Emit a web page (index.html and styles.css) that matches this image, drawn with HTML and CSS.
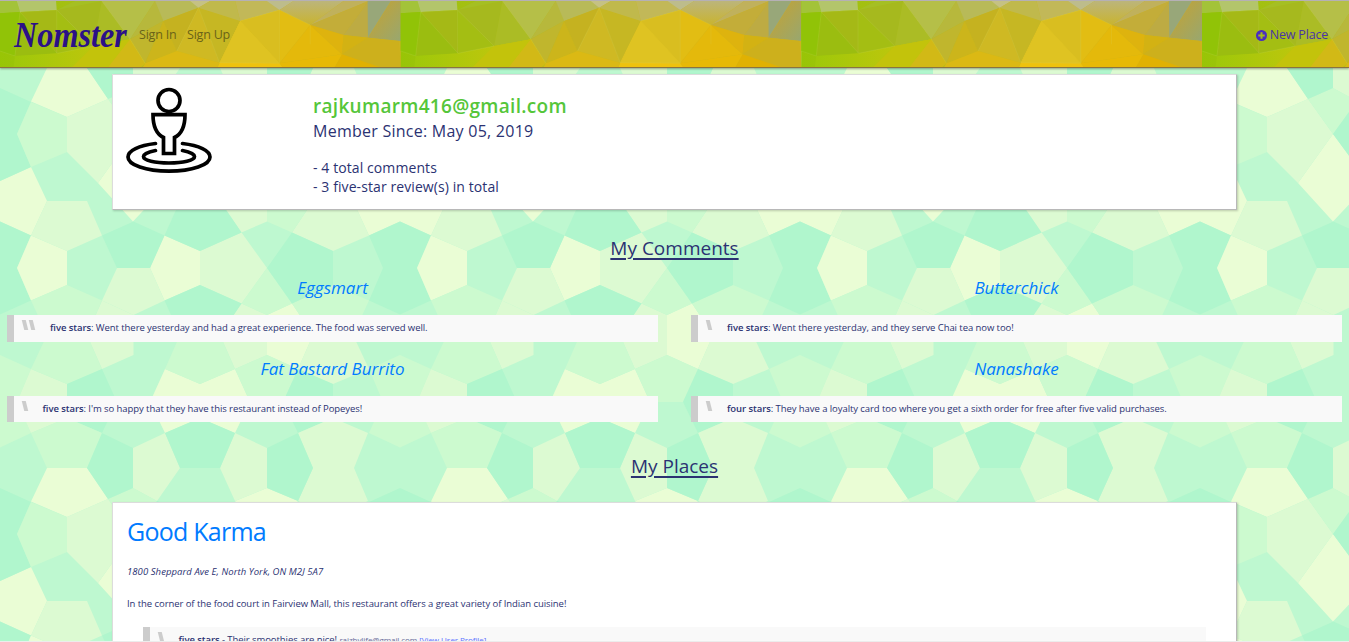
FILE: index.html
```html
<!DOCTYPE html>
<html lang="en">
<head>
<meta charset="utf-8">
<title>Nomster</title>
<link rel="stylesheet" href="styles.css">
</head>
<body>
<svg class="backdrop" width="1349" height="642" aria-hidden="true">
  <defs>
    <g id="tile">
      <g fill="#eafdd5">
        <path d="M31 235.5L67 251V285L31 300.5 17 268zM164.5 235.5L200 251V285L164.5 300.5 150 268z"/>
        <path d="M353 201L369 235.5 400 221.5 431 235.5 447 201 431 167 400 181 369 167z"/>
        <path d="M165 369L200 384 235 369 250 402 235 433 200 418 165 433 150 402z"/>
        <path d="M267 315L292 303.5 313 335 298 369 267 355zM133 134L98 183 133 221.5 169 183zM47 68H87L108 99 67 117 31 101.5zM235 101L267 88 298 101 267 134z"/>
      </g>
      <g fill="#dcfad2">
        <path d="M47 201H87L102 235.5 67 251 31 235.5zM200 251L241.5 232.5 267 268 241.5 303.5 200 285zM117 268H150L164.5 300.5 133.5 315 102 300.5z"/>
        <path d="M87 335L102 300.5 133.5 315V355L102 369zM31 369L67 384V418L31 433 17 402zM292 232.5L333 251 369 235.5 353 201H313z"/>
        <path d="M67 117L108 99 133 134 98 183 67 152zM133 48L165 33 180 68 157 101 133 88zM235 33L267 48V88L235 101 220 68zM298 33L333 18 368 33 354 68 368 101 333 117 298 101 313 68z"/>
        <path d="M220 335L241.5 303.5 267 315V355L235 369zM313 335H353L369 369 333 384 298 369zM220 201L241.5 232.5 267 221.5V182z"/>
      </g>
      <g fill="#ccfacf">
        <path d="M31 300.5L67 285 102 300.5 87 335H47zM180 335H220L235 369 200 384 165 369zM47 335H87L102 369 67 384 31 369z"/>
        <path d="M400 355L431 369 417 402 431 433 400 447.5 369 433 383 402 369 369zM31 33L67 18 102 33 87 68H47zM31 102L67 117V152L31 167 17 134z"/>
        <path d="M108 99L133 88 157 101 133 134zM235 369L267 355 298 369 283 402H250zM267 268L292 303.5 267 315 241.5 303.5zM292 303.5L333 285 369 300.5 353 335H313zM267 182L313 201 292 232.5 267 221.5z"/>
      </g>
      <g fill="#b0f6cd">
        <path d="M102 235.5L133.5 221.5 164.5 235.5 150 268H117zM180 201H220L241.5 232.5 200 251 164.5 235.5zM164.5 300.5L200 285 241.5 303.5 220 335H180z"/>
        <path d="M67 384L102 369 117 402 102 433 67 418zM400 221.5L431 235.5 417 268 431 300.5 400 314.5 369 300.5 383 268 369 235.5zM267 268L292 232.5 333 251V285L292 303.5z"/>
        <path d="M400 88L431 102 417 134 431 167 400 181 369 167 383 134 369 102zM87 68L102 33 133 48V88L108 99zM165 33L200 18 235 33 220 68H180zM267 48L298 33 313 68 298 101 267 88z"/>
        <path d="M298 369L333 384V418L298 433 283 402zM157 101L200 117V151L169 183 133 134z"/>
      </g>
    </g>
    <g id="column"><use href="#tile" y="-400"/><use href="#tile"/><use href="#tile" y="400"/></g>
  </defs>
  <rect width="1349" height="642" fill="#bef8d0"/>
  <use href="#column" x="-400"/><use href="#column"/><use href="#column" x="400"/><use href="#column" x="800"/><use href="#column" x="1200"/>
</svg>

<header class="navbar">
  <svg class="facets" width="1349" height="68" aria-hidden="true">
    <defs>
      <linearGradient id="sweep" x1="0" y1="0" x2="1202" y2="0" gradientUnits="userSpaceOnUse">
        <stop offset="0" stop-color="#98c506"/><stop offset=".25" stop-color="#aabd18"/><stop offset=".45" stop-color="#c7ba20"/><stop offset="1" stop-color="#ceb21f"/>
      </linearGradient>
      <linearGradient id="haze" x1="0" y1="0" x2="0" y2="1"><stop offset="0" stop-color="#bcb57b"/><stop offset="1" stop-color="#c9b42f"/></linearGradient>
      <linearGradient id="dusk" x1="0" y1="0" x2="1" y2="1"><stop offset=".3" stop-color="#b9a442"/><stop offset="1" stop-color="#98a770"/></linearGradient>
      <linearGradient id="lime" x1="0" y1="0" x2="1" y2="0"><stop offset="0" stop-color="#9fc80a"/><stop offset="1" stop-color="#cfc50e"/></linearGradient>
      <g id="facet" transform="scale(.3336 .3333)">
        <path fill="url(#sweep)" d="M0 0H1202V204H0z"/>
        <path fill="#a3c339" d="M0 0H50L60 33 0 37z"/><path fill="#b3c56b" d="M50 0H168L170 27 60 33z"/>
        <path fill="#a5bf23" d="M170 27L225 0H305L172 157z"/><path fill="#a5b916" d="M60 33L170 27 172 157z"/>
        <path fill="#9bbd10" d="M60 33L172 157 45 165z"/><path fill="#a4be13" d="M170 27L280 135 172 157z"/>
        <path fill="#a6b91e" d="M305 0L170 27 280 135z"/><path fill="#abbc25" d="M305 0L390 115 280 135z"/>
        <path fill="#b5bf48" d="M305 0H465L390 115z"/><path fill="#b7b83c" d="M465 0H530L490 60 390 115z"/>
        <path fill="#b8ba58" d="M465 0H580L595 20 490 60z"/><path fill="#c5c184" d="M570 0H630L595 20z"/>
        <path fill="#c0b62d" d="M490 60L390 115 435 187z"/><path fill="#ccb51b" d="M490 60L435 187 530 150z"/>
        <path fill="#c5b220" d="M490 60L595 20 530 150z"/><path fill="#cfb923" d="M595 20L530 150 658 185z"/>
        <path fill="#c6b723" d="M595 20L720 60 658 185z"/><path fill="#c0b94c" d="M630 0H705L720 60 595 20z"/>
        <path fill="#c2b858" d="M705 0H810L838 27 720 60z"/><path fill="#bdbc8c" d="M800 0H880L838 27z"/>
        <path fill="url(#haze)" d="M880 0H1030L930 72 838 27z"/><path fill="#c0b15c" d="M1030 0H1105L930 72z"/>
        <path fill="#c3ad39" d="M1105 0L1030 102 930 72z"/><path fill="#bdab43" d="M1105 0V110L1030 102z"/>
        <path fill="#98a779" d="M1102 0H1172L1103 110z"/><path fill="url(#dusk)" d="M1172 0H1202V120L1103 110z"/>
        <path fill="#dfc322" d="M720 60L838 27V187L658 185z"/><path fill="#d9be20" d="M838 27V187L720 60z"/>
        <path fill="#dfc322" d="M720 60L838 187 658 185z"/>
        <path fill="#e2bd13" d="M838 27L930 72 838 187z"/><path fill="#e4b90b" d="M930 72L838 187 1025 160z"/>
        <path fill="#deb30e" d="M930 72L1030 102 1025 160z"/><path fill="#d3b213" d="M1030 102L1103 110 1025 160z"/>
        <path fill="#cdb01c" d="M1103 110L1195 120 1202 204H1110L1025 160z"/><path fill="#e0b103" d="M1025 160L1155 204H1000z"/>
        <path fill="#e7b906" d="M838 187L1025 160 1000 204H850z"/><path fill="#eec20e" d="M658 185L838 187 850 204H650z"/>
        <path fill="url(#lime)" d="M45 165L172 157 280 135 390 115 435 187 415 204H40z"/>
        <path fill="#c3c30b" d="M280 135L390 115 320 204H210z"/><path fill="#d2b916" d="M390 115L435 187 415 204H320z"/>
        <path fill="#dbb914" d="M530 150L658 185 650 204H425L435 187z"/><path fill="#91c307" d="M0 37L60 33 45 165 0 150z"/>
        <path fill="none" stroke="#dce080" stroke-opacity=".2" stroke-width="2" d="M60 33L170 27V157M60 33L45 165 0 150M60 33L172 157 280 135 170 27M305 0L390 115 435 187M595 20L530 150M595 20L658 185M720 60L838 27V187L658 185M838 27L930 72V130"/>
      </g>
    </defs>
    <use href="#facet"/><use href="#facet" x="400.7"/><use href="#facet" x="801.3"/><use href="#facet" x="1202"/>
  </svg>
  <a class="brand">Nomster</a>
  <a class="nav-link sign-in">Sign In</a>
  <a class="nav-link sign-up">Sign Up</a>
  <a class="nav-link new-place">
    <svg width="11" height="11" viewBox="0 0 11 11" aria-hidden="true"><circle cx="5.5" cy="5.5" r="5.5" fill="#4a2dc0"/><path d="M5.5 2.3v6.4M2.3 5.5h6.4" stroke="#a5bd18" stroke-width="2"/></svg>
    <span>New Place</span>
  </a>
</header>

<main>
  <section class="card profile">
    <svg class="avatar" width="88" height="88" viewBox="0 0 88 88" fill="none" stroke="#000" stroke-width="3.7" stroke-linecap="round" stroke-linejoin="miter" aria-hidden="true">
      <circle cx="44" cy="14.5" r="11"/>
      <path d="M28 28.700H60C60 41 56.500 48 49.500 51.500V67.500H38.500V51.500C31.500 48 28 41 28 28.700z"/>
      <path d="M30.500 57.500C14 59.500 3 64.500 3 71C3 79 21 85.200 44 85.200S85 79 85 71C85 64.500 74 59.500 57.500 57.500"/>
      <path d="M30.500 64.500C22 66 18.500 68.500 18.500 70.500C18.500 74.500 30 77 44 77S69.500 74.500 69.500 70.500C69.500 68.500 66 66 57.500 64.500"/>
    </svg>
    <div class="details">
      <div class="email"><span>rajkumarm416@gmail.com</span></div>
      <div class="since"><span>Member Since: May 05, 2019</span></div>
      <div class="stat"><span>- 4 total comments</span></div>
      <div class="stat"><span>- 3 five-star review(s) in total</span></div>
    </div>
  </section>

  <h2 class="section-title"><span>My Comments</span></h2>
  <div class="comments">
    <article><h3><span>Eggsmart</span></h3><blockquote class="double"><i></i><i></i><p><b>five stars</b>: Went there yesterday and had a great experience. The food was served well.</p></blockquote></article>
    <article><h3><span>Butterchick</span></h3><blockquote><i></i><p><b>five stars</b>: Went there yesterday, and they serve Chai tea now too!</p></blockquote></article>
    <article><h3><span>Fat Bastard Burrito</span></h3><blockquote><i></i><p><b>five stars</b>: I'm so happy that they have this restaurant instead of Popeyes!</p></blockquote></article>
    <article><h3><span>Nanashake</span></h3><blockquote><i></i><p><b>four stars</b>: They have a loyalty card too where you get a sixth order for free after five valid purchases.</p></blockquote></article>
  </div>

  <h2 class="section-title places-title"><span>My Places</span></h2>
  <section class="card place">
    <h1><span>Good Karma</span></h1>
    <address><span>1800 Sheppard Ave E, North York, ON M2J 5A7</span></address>
    <p class="about"><span>In the corner of the food court in Fairview Mall, this restaurant offers a great variety of Indian cuisine!</span></p>
    <blockquote><i></i><p><b>five stars</b> - Their smoothies are nice! <small>rajzhylife@gmail.com <a>[View User Profile]</a></small></p></blockquote>
  </section>
</main>
</body>
</html>
```

FILE: styles.css
```css
* { box-sizing: border-box; }
html { height: 642px; overflow: hidden; }
body {
  margin: 0;
  height: 642px;
  overflow: hidden;
  position: relative;
  font-family: "Open Sans", "Noto Sans", sans-serif;
  color: #2b3272;
  border-bottom: 1px solid #ececec;
}
h1, h2, h3, p, blockquote, address { margin: 0; font-weight: 400; }
span, p { white-space: nowrap; }
.backdrop { position: absolute; inset: 0; z-index: -2; }

.navbar {
  position: relative;
  height: 68px;
  display: flex;
  align-items: center;
  padding: 2px 21px 0 14px;
  border-top: 1px solid #b5b0b5;
  border-bottom: 1px solid #8a7340;
  box-shadow: 0 1px 2px rgba(60, 60, 40, .45);
}
.facets { position: absolute; left: 0; top: 0; height: 66px; z-index: -1; }
.brand {
  width: 125px;
  font: italic 700 36px/62px "Liberation Serif", serif;
  color: #2b1187;
  transform: scaleX(.895);
  transform-origin: left;
}
.nav-link { font-size: 12.5px; letter-spacing: -.2px; color: #6a6318; line-height: 18px; }
.sign-in { width: 48px; }
.new-place {
  margin-left: auto;
  display: flex;
  align-items: center;
  gap: 3px;
  color: #4a35a8;
}

.card {
  width: 1125px;
  margin: 0 auto;
  background: #fff;
  border: 1px solid #dcdcdc;
  border-right-color: #b8b8b8;
  border-bottom-color: #b8b8b8;
  box-shadow: 1px 1px 2px rgba(0, 0, 0, .2);
}
.profile { margin-top: 6px; height: 136px; display: flex; padding: 11px 12px; }
.avatar { flex: none; }
.details { margin-left: 100px; padding-top: 7px; }
.email { font-size: 19px; font-weight: 600; letter-spacing: .3px; line-height: 26px; color: #55c63a; }
.since { font-size: 16px; letter-spacing: .25px; line-height: 24px; margin-bottom: 15px; }
.stat { font-size: 14px; letter-spacing: .09px; line-height: 19px; }

.section-title {
  font-size: 19px;
  line-height: 28px;
  text-align: center;
  margin-top: 24px;
  text-decoration: underline;
  text-decoration-thickness: 2px;
  text-underline-offset: 3px;
}
.comments {
  display: grid;
  grid-template-columns: 651px 651px;
  gap: 0 33px;
  padding: 14px 7px 0;
}
article h3 { font-size: 17px; font-style: italic; line-height: 24px; text-align: center; color: #007bff; }
article blockquote { margin: 15px 0 15px; }
blockquote {
  display: flex;
  height: 26.6px;
  background: #f9f9f9;
  border-left: 7px solid #ccc;
  padding: 5px 0 0 9px;
}
blockquote i { width: 4px; height: 10px; margin-right: 3px; background: #ccc; transform: skewX(14deg); }
blockquote p { margin-left: 13px; font-size: 9.5px; letter-spacing: -.07px; line-height: 15px; }
article:nth-child(3) p { margin-left: 12.5px; }
blockquote b { font-weight: 600; }

.places-title { margin-top: 14.8px; }
.place { margin-top: 22px; height: 180px; padding: 11px 14px; }
.place h1 { font-size: 25px; letter-spacing: -.75px; line-height: 34px; color: #007bff; }
address { font-size: 9.5px; letter-spacing: .07px; line-height: 16px; margin-top: 16px; }
.about { font-size: 9.5px; letter-spacing: -.065px; line-height: 16px; margin-top: 16px; }
.place blockquote { margin: 15px 16px 0 16px; }
.place blockquote p { margin-left: 12.5px; }
small { font-size: 8px; color: #686c99; }
small a { color: #5d74ff; }
```
